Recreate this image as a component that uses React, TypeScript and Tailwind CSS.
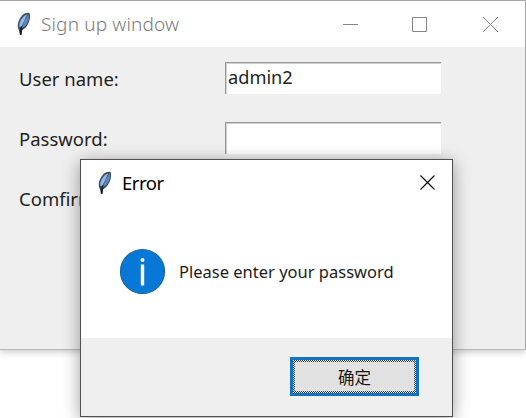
import React from "react";

const FONT = "font-['Noto_Sans','Open_Sans','Noto_Sans_CJK_SC',sans-serif]";

function Feather() {
  return (
    <svg width="16" height="24" viewBox="0 0 16 24" className="shrink-0">
      <path d="M3.800 18 C1.800 14 3 8.500 6.300 4.400 C8.600 1.400 12 .4 14.600 1 C15.800 5 14.600 10.500 11.400 14.600 C9.800 16.700 8 17.800 6.800 18.600 L6.400 23 H5 Z" fill="#3a4c64" />
      <path d="M4.200 14.500 C3.800 10 7.600 4 12.200 2.300 L9.500 8.500 L6 15.500 Z" fill="#92b7e0" />
      <path d="M13.700 2 C14.600 6 13 10.800 10.200 14 L6.600 16.600 L9.600 8.500 Z" fill="#5a86c2" />
      <path d="M6.600 14.500 L5.700 22.500" stroke="#111820" strokeWidth="1.700" fill="none" />
    </svg>
  );
}

function Field({ label, value }: { label: string; value: string }) {
  return (
    <div className="flex h-[60px] items-start">
      <label className="mt-[3px] w-[206px] text-[18.500px] leading-[28px] whitespace-nowrap">{label}</label>
      <div className="h-[32px] w-[216px] border-t border-l border-[#9a9a9a] bg-white pl-[2px] text-[18.200px] leading-[29px] shadow-[inset_1px_1px_0_#d0d0d0]">
        {value}
      </div>
    </div>
  );
}

function MainWindow() {
  return (
    <section className="h-[350px] w-[526px] border-t border-r border-b border-[#a5a5a5] border-b-[#b9b9b9] bg-[#efefef] shadow-[0_2px_7px_rgba(0,0,0,0.22)]">
      <header className="flex h-[46px] items-center bg-white pl-[15px] text-[#7c7c7c]">
        <Feather />
        <h1 className="ml-[10px] w-[300px] text-[19px] leading-[28px] font-light tracking-[0.15px]">Sign up window</h1>
        <svg width="157" height="18" viewBox="0 0 157 18" fill="none" stroke="#858585">
          <path d="M2 9.500H17M71.500 2.500H85.500V16.500H71.500ZM142 2L157 17M157 2L142 17" />
        </svg>
      </header>
      <main className="pt-[15px] pl-[19px] text-[#222]">
        <Field label="User name:" value="admin2" />
        <Field label="Password:" value="" />
        <Field label="Comfirm:" value="" />
      </main>
    </section>
  );
}

function ErrorDialog() {
  return (
    <section className="absolute top-[159px] left-[80px] flex h-[258px] w-[373px] flex-col border border-[#505050] bg-white shadow-[0_3px_16px_rgba(0,0,0,0.38)]">
      <header className="flex h-[45px] items-center pl-[15px] text-black">
        <Feather />
        <h2 className="ml-[10px] flex-1 text-[18.500px] leading-[28px] font-normal tracking-[-0.5px]">Error</h2>
        <svg width="17" height="17" viewBox="0 0 17 17" className="mr-[16px]" stroke="#000" strokeWidth="1.100">
          <path d="M1.500 1.500L15.500 15.500M15.500 1.500L1.500 15.500" />
        </svg>
      </header>
      <div className="flex h-[133px] items-center pl-[38px]">
        <svg width="48" height="48" viewBox="0 0 48 48" className="shrink-0">
          <circle cx="23.500" cy="23.500" r="22" fill="#0878d7" stroke="#15669f" strokeWidth="1.200" />
          <path d="M21.800 16.500H25.200V37.500H21.800Z" fill="white" />
          <circle cx="23.500" cy="12" r="2" fill="white" />
        </svg>
        <p className="ml-[12px] text-[16.500px] leading-[24px] whitespace-nowrap text-[#1c1c1c]">Please enter your password</p>
      </div>
      <footer className="flex flex-1 items-start justify-end bg-[#efefef] pt-[19px] pr-[33px]">
        <button className="h-[39px] w-[129px] border-[3px] border-[#1173c5] bg-[repeating-conic-gradient(#333_0_25%,#f0f0f0_0_50%)] bg-[length:2px_2px] p-[2px]">
          <span className="flex h-full items-center justify-center bg-[#e1e1e1] font-['Noto_Sans_CJK_SC',sans-serif] text-[16.500px] leading-[24px] text-[#151515]">确定</span>
        </button>
      </footer>
    </section>
  );
}

export default function App() {
  return (
    <div className={`relative h-[418px] w-[526px] overflow-hidden bg-white ${FONT}`}>
      <MainWindow />
      <ErrorDialog />
    </div>
  );
}
